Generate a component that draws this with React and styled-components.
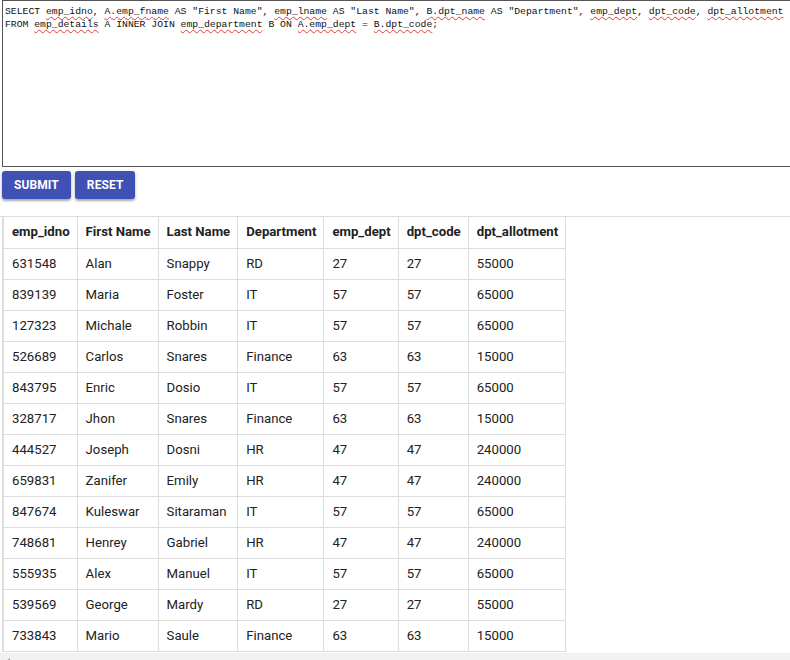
import React from 'react'
import styled, { createGlobalStyle } from 'styled-components'

const GlobalStyle = createGlobalStyle`
  html, body {
    margin: 0;
    padding: 0;
    background: #fff;
    overflow: hidden;
  }
  body {
    font-family: Roboto, "Liberation Sans", Arial, sans-serif;
  }
`

const Page = styled.div`
  width: 790px;
  height: 660px;
  overflow: hidden;
  display: flex;
  flex-direction: column;
  & > * {
    flex-shrink: 0;
  }
`

const QueryBox = styled.div`
  box-sizing: border-box;
  margin-left: 2px;
  width: 820px;
  height: 167px;
  border: 1px solid #555;
  padding: 4px 2px 3px;
  font-family: "Liberation Mono", "DejaVu Sans Mono", monospace;
  font-size: 9.75px;
  line-height: 13px;
  color: #111;
  white-space: pre;
  outline: none;
`

const Misspelt = styled.span`
  text-decoration: underline wavy #e53935;
  text-decoration-thickness: 1px;
  text-underline-offset: 2px;
`

const ButtonRow = styled.div`
  display: flex;
  gap: 4px;
  padding-left: 2px;
  margin-top: 4px;
`

const ActionButton = styled.button`
  height: 28px;
  padding: 0 ${(p) => p.$pad}px;
  border: none;
  border-radius: 3px;
  background: #3f51b5;
  color: #fff;
  font-family: Roboto, "Liberation Sans", sans-serif;
  font-size: 12px;
  font-weight: 700;
  letter-spacing: 0.1px;
  text-transform: uppercase;
  box-shadow: 0 2px 2px rgba(0, 0, 0, 0.25), 0 1px 4px rgba(0, 0, 0, 0.15);
  cursor: pointer;
`

const ResultPane = styled.div`
  margin-top: 17px;
  border-top: 1px solid #ddd;
  display: flex;
  flex-direction: column;
`

const Table = styled.table`
  margin-left: 2px;
  border-collapse: collapse;
  border-left: 2px solid #ddd;
  font-size: 13.2px;
  color: #222;
  width: max-content;
`

const HeadCell = styled.th`
  border: 1px solid #ddd;
  border-top: none;
  padding: 6px 7px 6px 8px;
  height: 31px;
  box-sizing: border-box;
  text-align: left;
  font-weight: 700;
  line-height: 18px;
  white-space: nowrap;
`

const Cell = styled.td`
  border: 1px solid #ddd;
  padding: 6px 7px 6px 8px;
  height: 31px;
  box-sizing: border-box;
  line-height: 18px;
  white-space: nowrap;
`

const ScrollTrack = styled.div`
  margin-top: 1px;
  height: 17px;
  background: #f1f1f1;
  position: relative;
`

const ScrollArrow = styled.span`
  position: absolute;
  left: 6px;
  top: 5px;
  width: 0;
  height: 0;
  border-top: 3px solid transparent;
  border-bottom: 3px solid transparent;
  border-right: 4px solid #a3a3a3;
`

const columns = ['emp_idno', 'First Name', 'Last Name', 'Department', 'emp_dept', 'dpt_code', 'dpt_allotment']

const rows = [
  ['631548', 'Alan', 'Snappy', 'RD', '27', '27', '55000'],
  ['839139', 'Maria', 'Foster', 'IT', '57', '57', '65000'],
  ['127323', 'Michale', 'Robbin', 'IT', '57', '57', '65000'],
  ['526689', 'Carlos', 'Snares', 'Finance', '63', '63', '15000'],
  ['843795', 'Enric', 'Dosio', 'IT', '57', '57', '65000'],
  ['328717', 'Jhon', 'Snares', 'Finance', '63', '63', '15000'],
  ['444527', 'Joseph', 'Dosni', 'HR', '47', '47', '240000'],
  ['659831', 'Zanifer', 'Emily', 'HR', '47', '47', '240000'],
  ['847674', 'Kuleswar', 'Sitaraman', 'IT', '57', '57', '65000'],
  ['748681', 'Henrey', 'Gabriel', 'HR', '47', '47', '240000'],
  ['555935', 'Alex', 'Manuel', 'IT', '57', '57', '65000'],
  ['539569', 'George', 'Mardy', 'RD', '27', '27', '55000'],
  ['733843', 'Mario', 'Saule', 'Finance', '63', '63', '15000'],
]

// words the browser's spell checker flags in the query
const flagged = new Set([
  'emp_idno', 'A.emp_fname', 'emp_lname', 'B.dpt_name', 'emp_dept', 'dpt_code',
  'dpt_allotment', 'emp_details', 'emp_department', 'A.emp_dept', 'B.dpt_code',
])

const query = [
  'SELECT emp_idno, A.emp_fname AS "First Name", emp_lname AS "Last Name", B.dpt_name AS "Department", emp_dept, dpt_code, dpt_allotment',
  'FROM emp_details A INNER JOIN emp_department B ON A.emp_dept = B.dpt_code;',
]

const renderLine = (line) =>
  line.split(/(\s+|,|;)/).map((part, i) =>
    flagged.has(part) ? <Misspelt key={i}>{part}</Misspelt> : <React.Fragment key={i}>{part}</React.Fragment>
  )

export default function App() {
  return (
    <>
      <GlobalStyle />
      <Page>
        <QueryBox contentEditable suppressContentEditableWarning spellCheck={false}>
          {query.map((line, i) => (
            <div key={i}>{renderLine(line)}</div>
          ))}
        </QueryBox>
        <ButtonRow>
          <ActionButton $pad={12}>Submit</ActionButton>
          <ActionButton $pad={12}>Reset</ActionButton>
        </ButtonRow>
        <ResultPane>
          <Table>
            <thead>
              <tr>
                {columns.map((c) => <HeadCell key={c}>{c}</HeadCell>)}
              </tr>
            </thead>
            <tbody>
              {rows.map((r) => (
                <tr key={r[0]}>
                  {r.map((v, i) => <Cell key={i}>{v}</Cell>)}
                </tr>
              ))}
            </tbody>
          </Table>
          <ScrollTrack><ScrollArrow /></ScrollTrack>
        </ResultPane>
      </Page>
    </>
  )
}
